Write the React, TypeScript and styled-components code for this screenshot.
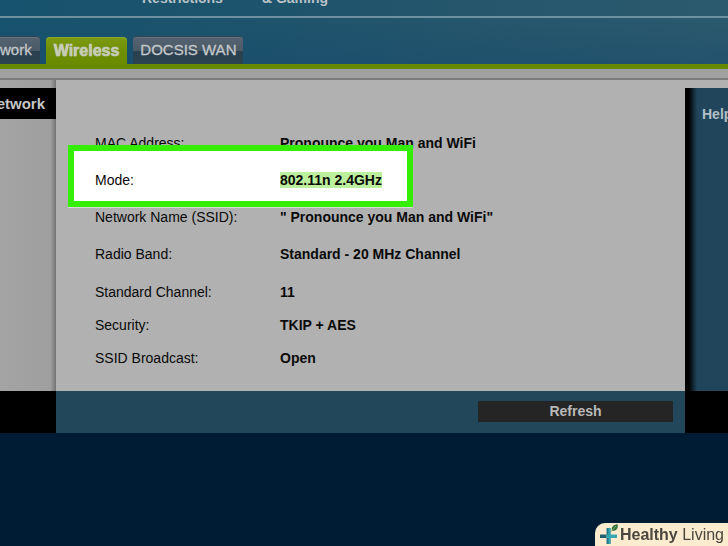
import React from "react";
import styled, { createGlobalStyle, css } from "styled-components";

const GlobalStyle = createGlobalStyle`
  * { box-sizing: border-box; }
  body {
    margin: 0;
    background: #001c34;
    font-family: "Liberation Sans", Arial, sans-serif;
    font-size: 14px;
    line-height: 16px;
    color: #0a0a0a;
  }
  button { font-family: inherit; }
`;

const Page = styled.div`
  min-height: 100vh;
  overflow: hidden;
`;

const Header = styled.header`
  background:
    linear-gradient(to bottom, rgba(24, 74, 108, 0) 30%, rgba(24, 74, 108, 0.45) 100%),
    linear-gradient(to right, #17536e 0%, #1d536c 35%, #25566c 65%, #2b5a6e 100%);
  border-bottom: 5px solid #698a00;
`;

const PrimaryNav = styled.nav`
  display: flex;
  align-items: flex-end;
  gap: 39px;
  height: 18px;
  padding: 0 0 10px 142px;
  border-bottom: 2px solid #6f909f;
`;

const PrimaryLink = styled.a`
  display: flex;
  align-items: flex-end;
  height: 6px;
  color: #b9c3c8;
  font-weight: bold;
  text-decoration: none;
  white-space: nowrap;
`;

const Tabs = styled.nav`
  display: flex;
  align-items: flex-end;
  gap: 6px;
  height: 46px;
`;

const Tab = styled.button<{ $active?: boolean; $cut?: boolean }>`
  height: 28px;
  padding: ${(p) => (p.$cut ? "0 8px 0 0" : p.$active ? "0 8px" : "0 7px")};
  border: 0;
  border-radius: ${(p) => (p.$cut ? "0 4px 0 0" : "4px 4px 0 0")};
  font-size: ${(p) => (p.$active ? "16px" : "15px")};
  line-height: 28px;
  white-space: nowrap;
  color: #c4c8ca;
  -webkit-text-stroke: 0.3px #c4c8ca;
  ${(p) =>
    p.$active
      ? css`
          height: 27px;
          font-weight: bold;
          background: linear-gradient(#7d9b12, #6f8f04 50%, #6a8b00);
          box-shadow: inset 0 1px #8aa630;
          color: #c8cdb0;
          text-shadow: 0 0 1px #d8dccb;
        `
      : css`
          background: linear-gradient(#566470 0, #4a5a67 52%, #2b4050 53%, #2b4352 100%);
          box-shadow: inset 0 1px #2e4353, inset 0 2px #66727c;
        `}
`;

const Band = styled.div`
  height: 11px;
  background: #a1a1a1;
  border-bottom: 2px solid #7c7c7c;
`;

const Body = styled.div`
  display: grid;
  grid-template-columns: 56px minmax(0, 1fr) 43px;
`;

const SideNav = styled.aside`
  padding-top: 8px;
  background: linear-gradient(to right, #a4a4a4 0, #9f9f9f 90%, #737373 100%);
`;

const SideTitle = styled.a`
  display: flex;
  justify-content: flex-end;
  padding-right: 11px;
  background: #000;
  color: #c6c6c6;
  font-size: 15px;
  font-weight: bold;
  line-height: 31px;
  text-decoration: none;
`;

const Main = styled.main`
  padding: 55px 0 8px 39px;
  background: #b1b1b1;
`;

const HelpColumn = styled.aside`
  padding-top: 8px;
  background: #b1b1b1;
`;

const HelpPanel = styled.div`
  height: 100%;
  padding: 18px 0 0 17px;
  background: linear-gradient(to right, #000 0, #000 4px, #21465c 12px);
`;

const HelpLink = styled.a`
  color: #b4c0c8;
  font-weight: bold;
  text-decoration: none;
`;

const Details = styled.table`
  border-collapse: collapse;
`;

const Row = styled.tr<{ $height: number }>`
  height: ${(p) => p.$height}px;
  vertical-align: top;
`;

const Label = styled.th`
  position: relative;
  width: 185px;
  padding: 0;
  font-weight: normal;
  text-align: left;
  white-space: nowrap;
`;

const Value = styled.td`
  padding: 0;
  font-weight: bold;
  white-space: nowrap;
`;

const Callout = styled.span`
  position: absolute;
  top: -27px;
  left: -27px;
  width: 345px;
  height: 62px;
  border: 6px solid #34ee05;
  background: #fff;
  box-shadow: 0 1px #d8d8d8;
`;

const Raised = styled.span`
  position: relative;
  z-index: 1;
`;

const Marked = styled.mark`
  position: relative;
  z-index: 1;
  background: #bdf09c;
  color: inherit;
`;

const Footer = styled.footer`
  display: grid;
  grid-template-columns: 56px minmax(0, 1fr) 43px;
  background: #000;
`;

const Actions = styled.div`
  grid-column: 2;
  display: flex;
  justify-content: flex-end;
  padding: 10px 12px 11px;
  background: #22475b;
`;

const RefreshButton = styled.button`
  width: 195px;
  height: 21px;
  padding: 0;
  border: 0;
  background: #252525;
  color: #b9b9b9;
  font-size: 14px;
  font-weight: bold;
  line-height: 21px;
`;

const Watermark = styled.div`
  position: fixed;
  right: 0;
  bottom: 0;
  display: flex;
  align-items: center;
  gap: 1px;
  height: 23px;
  padding: 0 4px 0 5px;
  border-top-left-radius: 10px;
  background: #fbebcf;
  color: #4a473f;
  font-size: 16px;
  line-height: 23px;
  white-space: pre;
`;

const rows = [
  { label: "MAC Address:", value: "Pronounce you Man and WiFi", height: 37 },
  { label: "Mode:", value: "802.11n 2.4GHz", height: 37, marked: true },
  { label: "Network Name (SSID):", value: "\" Pronounce you Man and WiFi\"", height: 37 },
  { label: "Radio Band:", value: "Standard - 20 MHz Channel", height: 38 },
  { label: "Standard Channel:", value: "11", height: 33 },
  { label: "Security:", value: "TKIP + AES", height: 33 },
  { label: "SSID Broadcast:", value: "Open", height: 33 },
];

function LeafCross() {
  return (
    <svg width="19" height="22" viewBox="0 0 19 22" aria-hidden="true">
      <path d="M6.5 4H10.5V20H6.5Z" fill="#25788a" />
      <path d="M0 10.5H6.5V14H0Z" fill="#245f70" />
      <path d="M6.5 10.5H17V14H6.5Z" fill="#36a6b0" />
      <path d="M8.5 4H10.5V20H8.5Z" fill="#36a6b0" />
      <path d="M12 7C11 3 13 1 17.5 0C18.5 4 17 7 12 7Z" fill="#34733b" />
      <path d="M11 8L16 2" stroke="#8fb77a" strokeWidth="0.7" />
    </svg>
  );
}

export default function App() {
  return (
    <Page>
      <GlobalStyle />
      <Header>
        <PrimaryNav>
          <PrimaryLink href="#restrictions">Restrictions</PrimaryLink>
          <PrimaryLink href="#gaming">&amp; Gaming</PrimaryLink>
        </PrimaryNav>
        <Tabs>
          <Tab $cut>work</Tab>
          <Tab $active>Wireless</Tab>
          <Tab>DOCSIS WAN</Tab>
        </Tabs>
      </Header>
      <Band />
      <Body>
        <SideNav>
          <SideTitle href="#network">etwork</SideTitle>
        </SideNav>
        <Main>
          <Details>
            <tbody>
              {rows.map((row) => (
                <Row key={row.label} $height={row.height}>
                  <Label scope="row">
                    {row.marked && <Callout />}
                    {row.marked ? <Raised>{row.label}</Raised> : row.label}
                  </Label>
                  <Value>{row.marked ? <Marked>{row.value}</Marked> : row.value}</Value>
                </Row>
              ))}
            </tbody>
          </Details>
        </Main>
        <HelpColumn>
          <HelpPanel>
            <HelpLink href="#help">Help</HelpLink>
          </HelpPanel>
        </HelpColumn>
      </Body>
      <Footer>
        <Actions>
          <RefreshButton type="button">Refresh</RefreshButton>
        </Actions>
      </Footer>
      <Watermark>
        <LeafCross />
        <span>
          <b>Healthy</b> Living
        </span>
      </Watermark>
    </Page>
  );
}
